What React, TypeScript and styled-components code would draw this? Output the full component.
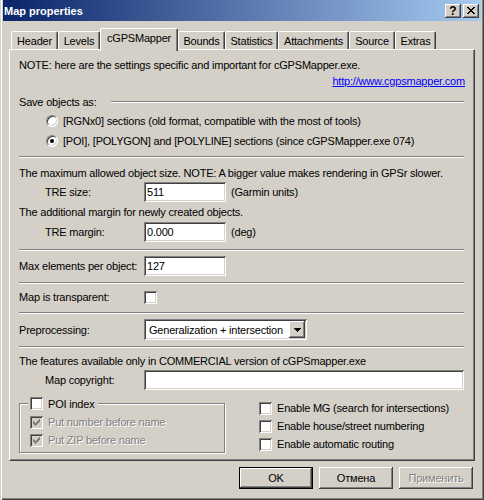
import React from "react";
import styled, { createGlobalStyle } from "styled-components";

const GlobalStyle = createGlobalStyle`
  html, body {
    margin: 0;
    padding: 0;
    background: #d4d0c8;
  }
  body {
    font-family: "Liberation Sans", Arial, sans-serif;
    font-size: 11px;
    letter-spacing: -0.2px;
    color: #000;
  }
  * {
    box-sizing: border-box;
  }
`;

const raised =
  "inset -1px -1px #404040, inset 1px 1px #fff, inset -2px -2px #808080, inset 2px 2px #d4d0c8";
const sunken =
  "inset 1px 1px #808080, inset -1px -1px #fff, inset 2px 2px #404040, inset -2px -2px #d4d0c8";

const Window = styled.div`
  width: 484px;
  height: 500px;
  display: flex;
  flex-direction: column;
  padding: 0 3px 3px 3px;
  background: #d4d0c8;
  box-shadow: inset 1px 0 #d4d0c8, inset 2px 0 #fff, inset -1px -1px #404040,
    inset -2px -2px #808080;
`;

const TitleBar = styled.div`
  height: 21px;
  display: flex;
  align-items: center;
  padding: 0 2px 0 1px;
  background: linear-gradient(to right, #0a246a, #a6caf0);
  color: #fff;
  font-weight: bold;
  letter-spacing: 0;
`;

const Caption = styled.span`
  flex: 1;
`;

const CaptionButton = styled.div`
  width: 16px;
  height: 14px;
  margin-left: 2px;
  background: #d4d0c8;
  box-shadow: ${raised};
  color: #000;
  display: flex;
  align-items: center;
  justify-content: center;
  font-size: 12px;
  font-weight: bold;
  line-height: 1;
`;

const Body = styled.div`
  flex: 1;
  display: flex;
  flex-direction: column;
  padding: 7px 6px 0 6px;
`;

const TabStrip = styled.div`
  position: relative;
  z-index: 1;
  display: flex;
  align-items: flex-end;
  padding-left: 2px;
  margin-bottom: -2px;
`;

const Tab = styled.div<{ $width: number; $active?: boolean }>`
  width: ${(p) => p.$width}px;
  height: ${(p) => (p.$active ? 23 : 18)}px;
  margin-bottom: ${(p) => (p.$active ? 0 : 2)}px;
  padding-bottom: ${(p) => (p.$active ? 4 : 0)}px;
  display: flex;
  align-items: center;
  justify-content: center;
  background: #d4d0c8;
  border-top: 1px solid #fff;
  border-left: 1px solid #fff;
  border-right: 1px solid #404040;
  border-radius: 2px 2px 0 0;
  box-shadow: inset -1px 0 #808080;
  white-space: nowrap;
`;

const Panel = styled.div`
  height: 412px;
  display: flex;
  flex-direction: column;
  padding: 0 10px 0 9px;
  border: 1px solid;
  border-color: #fff #404040 #404040 #fff;
  box-shadow: inset -1px -1px #808080;
`;

const Section = styled.div<{ $pt: number; $pb: number }>`
  display: flex;
  flex-direction: column;
  padding-top: ${(p) => p.$pt}px;
  padding-bottom: ${(p) => p.$pb}px;
`;

const Separator = styled.div`
  height: 2px;
  border-top: 1px solid #808080;
  border-bottom: 1px solid #fff;
`;

const TextLine = styled.div<{ $h?: number }>`
  height: ${(p) => p.$h ?? 18}px;
  display: flex;
  align-items: center;
  white-space: nowrap;
`;

const LinkLine = styled.div`
  height: 14px;
  display: flex;
  justify-content: flex-end;
  margin-right: -1px;
`;

const LinkClip = styled.div`
  width: 134px;
  overflow: hidden;
  display: flex;
  justify-content: flex-end;
  align-items: center;
`;

const Link = styled.a`
  color: #0000ff;
  text-decoration: underline;
  white-space: nowrap;
  flex: none;
`;

const Heading = styled.div`
  height: 18px;
  margin-top: 5px;
  display: flex;
  align-items: center;
`;

const HeadingRule = styled.div`
  flex: 1;
  height: 2px;
  margin-left: 14px;
  border-top: 1px solid #808080;
  border-bottom: 1px solid #fff;
`;

const OptionRow = styled.div`
  height: 20px;
  display: flex;
  align-items: center;
  gap: 5px;
  padding-left: 27px;
  white-space: nowrap;
`;

const Radio = styled.span<{ $checked?: boolean }>`
  width: 12px;
  height: 12px;
  flex: none;
  border-radius: 50%;
  background: #fff;
  border: 1px solid;
  border-color: #808080 #fff #fff #808080;
  box-shadow: inset 1px 1px #404040, inset -1px -1px #d4d0c8;
  display: flex;
  align-items: center;
  justify-content: center;

  &::after {
    content: "";
    width: 4px;
    height: 4px;
    border-radius: 50%;
    background: ${(p) => (p.$checked ? "#000" : "transparent")};
  }
`;

const FieldRow = styled.div<{ $h?: number }>`
  height: ${(p) => p.$h ?? 20}px;
  display: flex;
  align-items: center;
  white-space: nowrap;
`;

const Label = styled.span<{ $indent?: number }>`
  width: 125px;
  flex: none;
  padding-left: ${(p) => p.$indent ?? 0}px;
`;

const TextBox = styled.input<{ $width: number }>`
  width: ${(p) => p.$width}px;
  height: 20px;
  padding: 0 3px;
  border: none;
  outline: none;
  background: #fff;
  box-shadow: ${sunken};
  font: inherit;
  letter-spacing: inherit;
  color: #000;
`;

const Unit = styled.span`
  margin-left: 5px;
`;

const CheckBox = styled.span<{ $disabled?: boolean }>`
  width: 13px;
  height: 13px;
  flex: none;
  background: ${(p) => (p.$disabled ? "#d4d0c8" : "#fff")};
  box-shadow: ${sunken};
  display: flex;
  align-items: center;
  justify-content: center;
`;

const Combo = styled.div`
  width: 163px;
  height: 21px;
  padding: 2px;
  display: flex;
  background: #fff;
  box-shadow: ${sunken};
`;

const ComboText = styled.span`
  flex: 1;
  padding-left: 3px;
  display: flex;
  align-items: center;
  white-space: nowrap;
`;

const ComboButton = styled.span`
  width: 16px;
  flex: none;
  background: #d4d0c8;
  box-shadow: ${raised};
  display: flex;
  align-items: center;
  justify-content: center;
`;

const Extras = styled.div`
  margin-top: 7px;
  display: flex;
  gap: 34px;
`;

const Group = styled.fieldset`
  width: 206px;
  margin: 0;
  padding: 3px 0 2px 8px;
  border: 1px solid #808080;
  box-shadow: inset 1px 1px #fff, 1px 1px #fff;
  display: flex;
  flex-direction: column;
`;

const Legend = styled.legend`
  padding: 0 3px 0 2px;
  background: #d4d0c8;
`;

const CheckRow = styled.div<{ $disabled?: boolean }>`
  height: 18px;
  display: flex;
  align-items: center;
  gap: 5px;
  padding-left: ${(p) => (p.$disabled ? 2 : 0)}px;
  white-space: nowrap;
  color: ${(p) => (p.$disabled ? "#808080" : "#000")};
  text-shadow: ${(p) => (p.$disabled ? "1px 1px #fff" : "none")};
`;

const LegendRow = styled(CheckRow)`
  height: 13px;
`;

const RightChecks = styled.div`
  padding-top: 2px;
  display: flex;
  flex-direction: column;
`;

const ButtonRow = styled.div`
  margin-top: 6px;
  display: flex;
  justify-content: flex-end;
  gap: 6px;
  padding-right: 2px;
`;

const PushButton = styled.div<{ $default?: boolean; $disabled?: boolean }>`
  width: 74px;
  height: 22px;
  display: flex;
  align-items: center;
  justify-content: center;
  background: #d4d0c8;
  box-shadow: ${(p) =>
    p.$default
      ? "inset 0 0 0 1px #000, inset -2px -2px #404040, inset 2px 2px #fff, inset -3px -3px #808080"
      : raised};
  color: ${(p) => (p.$disabled ? "#808080" : "#000")};
  text-shadow: ${(p) => (p.$disabled ? "1px 1px #fff" : "none")};
`;

const CheckMark = ({ color }: { color: string }) => (
  <svg width="7" height="7" viewBox="0 0 7 7" shapeRendering="crispEdges">
    <path
      d="M6 0h1v3h-1v1h-1v1h-1v1h-1v1h-1v-1h-1v-1h-1v-3h1v1h1v1h1v-1h1v-1h1z"
      fill={color}
    />
  </svg>
);

const CloseGlyph = () => (
  <svg width="8" height="7" viewBox="0 0 8 7" shapeRendering="crispEdges">
    <path
      d="M0 0h2v1h1v1h2v-1h1v-1h2v1h-1v1h-1v1h-1v1h1v1h1v1h1v1h-2v-1h-1v-1h-2v1h-1v1h-2v-1h1v-1h1v-1h1v-1h-1v-1h-1z"
      fill="#000"
    />
  </svg>
);

const DownArrow = () => (
  <svg width="7" height="4" viewBox="0 0 7 4" shapeRendering="crispEdges">
    <path d="M0 0h7v1h-1v1h-1v1h-1v1h-1v-1h-1v-1h-1v-1h-1z" fill="#000" />
  </svg>
);

const tabs = [
  { label: "Header", width: 47 },
  { label: "Levels", width: 42 },
  { label: "cGPSMapper", width: 78, active: true },
  { label: "Bounds", width: 47 },
  { label: "Statistics", width: 53 },
  { label: "Attachments", width: 71 },
  { label: "Source", width: 46 },
  { label: "Extras", width: 41 },
];

export default function App() {
  return (
    <>
      <GlobalStyle />
      <Window>
        <TitleBar>
          <Caption>Map properties</Caption>
          <CaptionButton>?</CaptionButton>
          <CaptionButton>
            <CloseGlyph />
          </CaptionButton>
        </TitleBar>
        <Body>
          <TabStrip>
            {tabs.map((t) => (
              <Tab key={t.label} $width={t.width} $active={t.active}>
                {t.label}
              </Tab>
            ))}
          </TabStrip>
          <Panel>
            <Section $pt={6} $pb={5}>
              <TextLine>
                NOTE: here are the settings specific and important for cGPSMapper.exe.
              </TextLine>
              <LinkLine>
                <LinkClip>
                  <Link>http://www.cgpsmapper.com</Link>
                </LinkClip>
              </LinkLine>
              <Heading>
                <span>Save objects as:</span>
                <HeadingRule />
              </Heading>
              <OptionRow>
                <Radio />
                [RGNx0] sections (old format, compatible with the most of tools)
              </OptionRow>
              <OptionRow>
                <Radio $checked />
                [POI], [POLYGON] and [POLYLINE] sections (since cGPSMapper.exe 074)
              </OptionRow>
            </Section>
            <Separator />
            <Section $pt={6} $pb={7}>
              <TextLine>
                The maximum allowed object size. NOTE: A bigger value makes rendering in GPSr
                slower.
              </TextLine>
              <FieldRow>
                <Label $indent={26}>TRE size:</Label>
                <TextBox $width={82} defaultValue="511" readOnly />
                <Unit>(Garmin units)</Unit>
              </FieldRow>
              <TextLine $h={20}>The additional margin for newly created objects.</TextLine>
              <FieldRow>
                <Label $indent={26}>TRE margin:</Label>
                <TextBox $width={82} defaultValue="0.000" readOnly />
                <Unit>(deg)</Unit>
              </FieldRow>
            </Section>
            <Separator />
            <Section $pt={5} $pb={6}>
              <FieldRow>
                <Label>Max elements per object:</Label>
                <TextBox $width={82} defaultValue="127" readOnly />
              </FieldRow>
            </Section>
            <Separator />
            <Section $pt={3} $pb={5}>
              <FieldRow>
                <Label>Map is transparent:</Label>
                <CheckBox />
              </FieldRow>
            </Section>
            <Separator />
            <Section $pt={5} $pb={6}>
              <FieldRow $h={21}>
                <Label>Preprocessing:</Label>
                <Combo>
                  <ComboText>Generalization + intersection</ComboText>
                  <ComboButton>
                    <DownArrow />
                  </ComboButton>
                </Combo>
              </FieldRow>
            </Section>
            <Separator />
            <Section $pt={4} $pb={0}>
              <TextLine>
                The features available only in COMMERCIAL version of cGPSmapper.exe
              </TextLine>
              <FieldRow>
                <Label $indent={26}>Map copyright:</Label>
                <TextBox $width={320} defaultValue="" readOnly />
              </FieldRow>
              <Extras>
                <Group>
                  <Legend>
                    <LegendRow>
                      <CheckBox />
                      POI index
                    </LegendRow>
                  </Legend>
                  <CheckRow $disabled>
                    <CheckBox $disabled>
                      <CheckMark color="#808080" />
                    </CheckBox>
                    Put number before name
                  </CheckRow>
                  <CheckRow $disabled>
                    <CheckBox $disabled>
                      <CheckMark color="#808080" />
                    </CheckBox>
                    Put ZIP before name
                  </CheckRow>
                </Group>
                <RightChecks>
                  <CheckRow>
                    <CheckBox />
                    Enable MG (search for intersections)
                  </CheckRow>
                  <CheckRow>
                    <CheckBox />
                    Enable house/street numbering
                  </CheckRow>
                  <CheckRow>
                    <CheckBox />
                    Enable automatic routing
                  </CheckRow>
                </RightChecks>
              </Extras>
            </Section>
          </Panel>
          <ButtonRow>
            <PushButton $default>OK</PushButton>
            <PushButton>Отмена</PushButton>
            <PushButton $disabled>Применить</PushButton>
          </ButtonRow>
        </Body>
      </Window>
    </>
  );
}
